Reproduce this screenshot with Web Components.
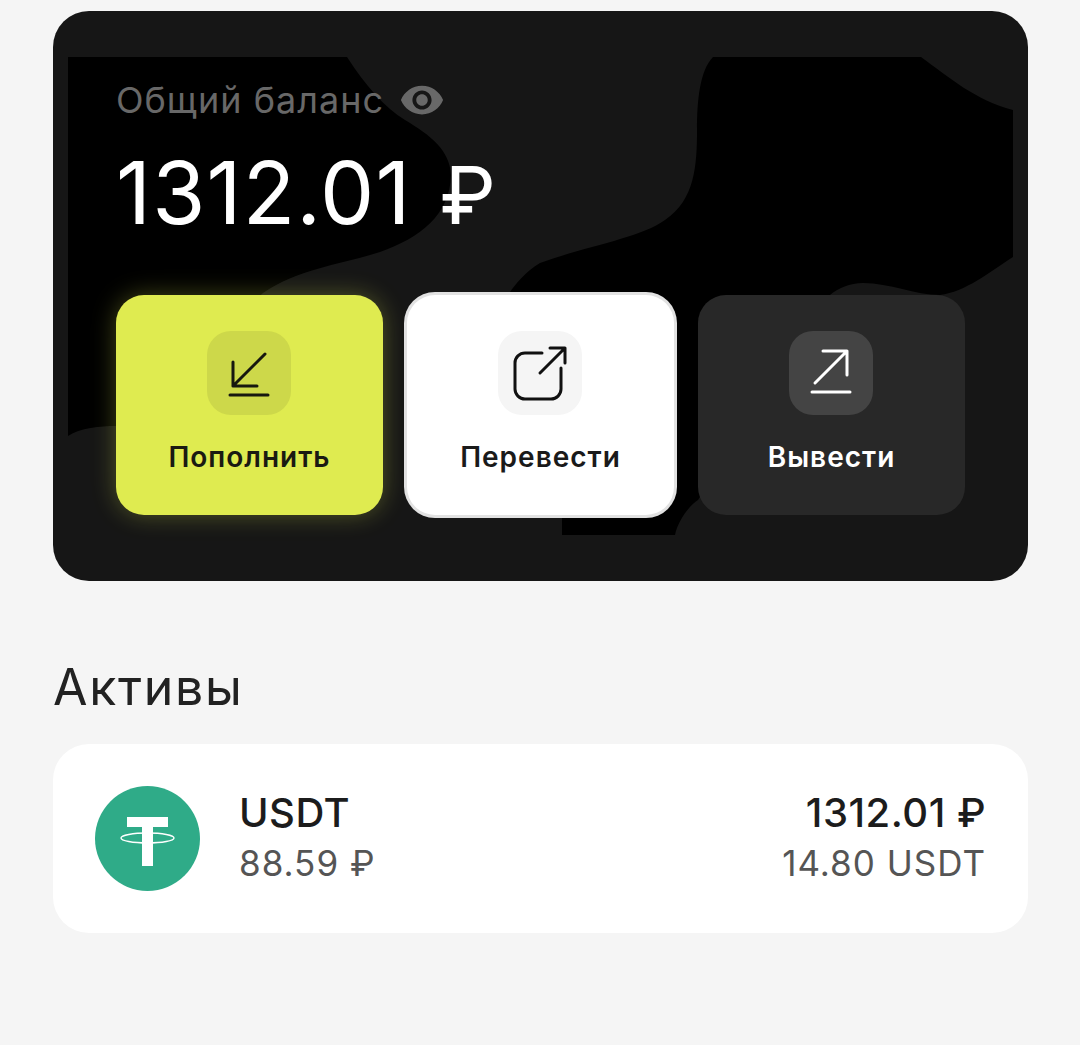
<!DOCTYPE html>
<html lang="ru">
<head>
<meta charset="utf-8">
<title>Баланс</title>
<style>
  html, body { margin: 0; background: #f5f5f5; }
  body { font-family: Inter, "Noto Sans", sans-serif; color: #1c1c1c; }
  wallet-page { width: 975px; margin-left: 53px; padding-top: 11px; }
</style>
</head>
<body>
<wallet-page>
  <balance-card amount="1312.01" currency="₽" label="Общий баланс">
    <action-button kind="topup" label="Пополнить"></action-button>
    <action-button kind="transfer" label="Перевести"></action-button>
    <action-button kind="withdraw" label="Вывести"></action-button>
  </balance-card>
  <asset-list title="Активы">
    <asset-row name="USDT" rate="88.59 ₽" total="1312.01 ₽" amount="14.80 USDT"></asset-row>
  </asset-list>
</wallet-page>
<script>
const ICONS = {
  topup: `<path d="M58 23 26 55M26 31V55H50M23 64H61"/>`,
  transfer: `<path d="M44 22H27a10 10 0 0 0-10 10V58a10 10 0 0 0 10 10H53a10 10 0 0 0 10-10V37M42 42 67 17M52 17H67V32"/>`,
  withdraw: `<path d="M26 52 58 20M34 20H58V44M23 61H61"/>`,
};

class WalletPage extends HTMLElement {
  constructor() {
    super();
    this.attachShadow({ mode: "open" });
    this.shadowRoot.innerHTML = `
      <style>
        :host { display: block; box-sizing: content-box; }
      </style>
      <slot></slot>`;
  }
}

class BalanceCard extends HTMLElement {
  constructor() {
    super();
    this.attachShadow({ mode: "open" });
  }

  connectedCallback() {
    this.shadowRoot.innerHTML = `
      <style>
        :host {
          display: block;
          position: relative;
          background: #161616;
          border-radius: 36px;
          padding: 67px 63px 66px;
          overflow: hidden;
        }
        .blobs { position: absolute; left: 0; top: 0; }
        .content { position: relative; }
        .label {
          display: flex;
          align-items: center;
          gap: 16px;
          height: 44px;
          font-size: 36px;
          letter-spacing: 1px;
          color: #686868;
        }
        .label svg { display: block; fill: #686868; margin-left: -1px; }
        .amount {
          display: flex;
          align-items: baseline;
          gap: 28px;
          margin-top: 21px;
          height: 98px;
          font-size: 86px;
          line-height: 100px;
          color: #fff;
          letter-spacing: 1.2px;
        }
        .amount span + span { font-size: 80px; letter-spacing: 0; }
        .actions {
          display: grid;
          grid-template-columns: repeat(3, 267px);
          gap: 24px;
          margin-top: 54px;
        }
      </style>
      <svg class="blobs" width="975" height="570" viewBox="53 11 975 570">
        <path fill="#000" d="M68 57H347C365 85 385 108 405 120C430 135 450 150 451 175C450 215 420 238 380 252C340 265 300 268 263 293L116 426C100 426 80 428 68 436Z"/>
        <path fill="#000" d="M713 57H921C950 78 975 100 1013 110V257C990 272 965 292 940 295C915 295 890 283 863 283C850 283 838 288 830 295L698 500C690 505 678 520 675 535H562V400L510 292C515 285 525 272 540 263C590 245 640 238 665 220C695 200 697 165 697 130C697 100 700 70 713 57Z"/>
      </svg>
      <div class="content">
        <div class="label">
          <span>${this.getAttribute("label")}</span>
          <svg width="46" height="46" viewBox="0 0 24 24"><path d="M12 4.5C7 4.5 2.73 7.61 1 12c1.73 4.39 6 7.5 11 7.5s9.27-3.11 11-7.5c-1.73-4.39-6-7.5-11-7.5zM12 17c-2.76 0-5-2.24-5-5s2.24-5 5-5 5 2.24 5 5-2.24 5-5 5zm0-8c-1.66 0-3 1.34-3 3s1.34 3 3 3 3-1.34 3-3-1.34-3-3-3z"/></svg>
        </div>
        <div class="amount"><span>${this.getAttribute("amount")}</span><span>${this.getAttribute("currency")}</span></div>
        <div class="actions"><slot></slot></div>
      </div>`;
  }
}

class ActionButton extends HTMLElement {
  constructor() {
    super();
    this.attachShadow({ mode: "open" });
  }

  connectedCallback() {
    const kind = this.getAttribute("kind");
    this.shadowRoot.innerHTML = `
      <style>
        :host {
          display: flex;
          flex-direction: column;
          align-items: center;
          height: 220px;
          box-sizing: border-box;
          padding-top: 36px;
          border-radius: 28px;
          font-size: 28px;
          font-weight: 600;
          letter-spacing: 1px;
        }
        :host([kind="topup"]) { background: #dfeb50; color: #1a1a12; box-shadow: 0 0 24px rgba(223, 235, 80, .3); --tile: #cdd84a; --ink: #17170f; }
        :host([kind="transfer"]) { background: #fff; color: #1a1a1a; box-shadow: 0 0 0 3px #e2e2e2; --tile: #f5f5f5; --ink: #111; }
        :host([kind="withdraw"]) { background: #282828; color: #fff; --tile: #444; --ink: #fff; }
        .tile { width: 84px; height: 84px; margin-right: 1px; border-radius: 24px; background: var(--tile); }
        svg { display: block; fill: none; stroke: var(--ink); stroke-width: 3; stroke-linecap: round; stroke-linejoin: round; }
        .text { margin-top: 24px; line-height: 36px; }
      </style>
      <div class="tile"><svg width="84" height="84" viewBox="0 0 84 84">${ICONS[kind]}</svg></div>
      <div class="text">${this.getAttribute("label")}</div>`;
  }
}

class AssetList extends HTMLElement {
  constructor() {
    super();
    this.attachShadow({ mode: "open" });
  }

  connectedCallback() {
    this.shadowRoot.innerHTML = `
      <style>
        :host { display: block; }
        h2 {
          margin: 76px 0 27px;
          font-size: 50px;
          line-height: 60px;
          font-weight: 400;
          letter-spacing: 1.7px;
          color: #222;
        }
        .rows { background: #fff; border-radius: 36px; }
      </style>
      <h2>${this.getAttribute("title")}</h2>
      <div class="rows"><slot></slot></div>`;
  }
}

class AssetRow extends HTMLElement {
  constructor() {
    super();
    this.attachShadow({ mode: "open" });
  }

  connectedCallback() {
    this.shadowRoot.innerHTML = `
      <style>
        :host {
          display: flex;
          align-items: center;
          padding: 42px 43px 42px 42px;
        }
        svg { display: block; flex: none; }
        .col { display: flex; flex-direction: column; }
        .left { margin-left: 39px; }
        .right { margin-left: auto; margin-right: -1px; align-items: flex-end; }
        .main { font-size: 40px; line-height: 50px; font-weight: 450; letter-spacing: 0.5px; color: #1c1c1c; margin-top: -2px; }
        .sub { font-size: 35px; line-height: 50px; color: #555; letter-spacing: 1px; margin-bottom: -1px; }
      </style>
      <svg width="105" height="105" viewBox="0 0 105 105">
        <circle cx="52.5" cy="52.5" r="52.5" fill="#2fab88"/>
        <ellipse cx="52.5" cy="52" rx="26.5" ry="5" fill="none" stroke="#fff" stroke-width="1.4"/>
        <path fill="#fff" d="M32 31H73V41H58V80H47V41H32Z"/>
      </svg>
      <div class="col left">
        <div class="main">${this.getAttribute("name")}</div>
        <div class="sub">${this.getAttribute("rate")}</div>
      </div>
      <div class="col right">
        <div class="main">${this.getAttribute("total")}</div>
        <div class="sub">${this.getAttribute("amount")}</div>
      </div>`;
  }
}

customElements.define("wallet-page", WalletPage);
customElements.define("balance-card", BalanceCard);
customElements.define("action-button", ActionButton);
customElements.define("asset-list", AssetList);
customElements.define("asset-row", AssetRow);
</script>
</body>
</html>
